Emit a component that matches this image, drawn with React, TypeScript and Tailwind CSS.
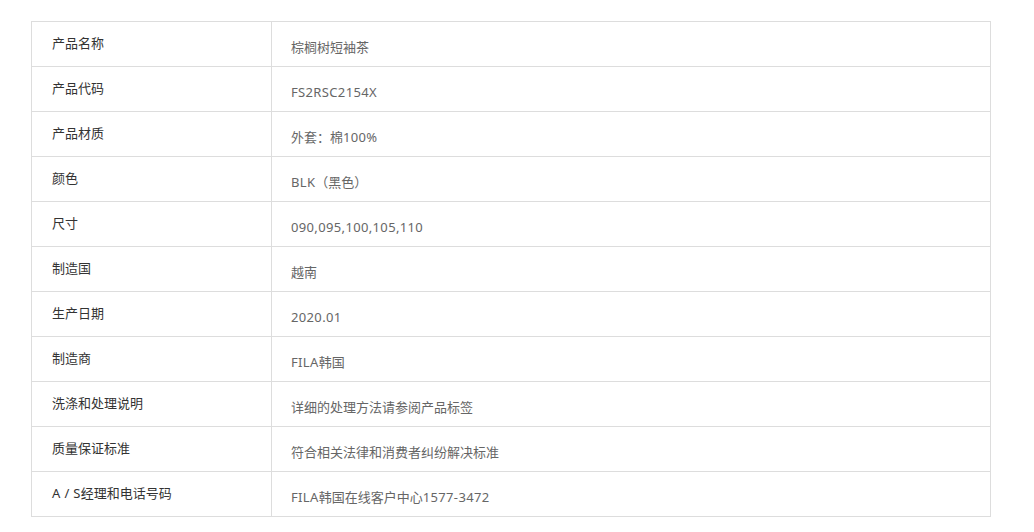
import React from "react";

const rows: [string, string][] = [
  ["产品名称", "棕榈树短袖茶"],
  ["产品代码", "FS2RSC2154X"],
  ["产品材质", "外套：棉100%"],
  ["颜色", "BLK（黑色）"],
  ["尺寸", "090,095,100,105,110"],
  ["制造国", "越南"],
  ["生产日期", "2020.01"],
  ["制造商", "FILA韩国"],
  ["洗涤和处理说明", "详细的处理方法请参阅产品标签"],
  ["质量保证标准", "符合相关法律和消费者纠纷解决标准"],
  ["A / S经理和电话号码", "FILA韩国在线客户中心1577-3472"],
];

function Mixed({ text }: { text: string }) {
  const parts = text.match(/[\x20-\x7e]+|[^\x20-\x7e]+/g) || [];
  return (
    <>
      {parts.map((p, i) =>
        /^[\x20-\x7e]+$/.test(p) ? (
          <span key={i} className="tracking-[0.35px]">
            {p}
          </span>
        ) : (
          <span key={i}>{p}</span>
        )
      )}
    </>
  );
}

export default function App() {
  return (
    <div
      className="w-[1034px] h-[532px] bg-white pt-[21px] pl-[31px]"
      style={{ fontFamily: '"Noto Sans", "Noto Sans CJK SC", sans-serif' }}
    >
      <div className="w-[960px] border border-[#dddddd] border-b-0">
        {rows.map(([k, v]) => (
          <div key={k} className="flex h-[45px] border-b border-[#dddddd]">
            <div className="w-[240px] shrink-0 border-r border-[#dddddd] pl-[20px] pt-[11px] text-[13px] leading-[20px] text-[#333333]">
              <Mixed text={k} />
            </div>
            <div className="flex-1 pl-[19px] pt-[15px] text-[13px] leading-[20px] text-[#666666]">
              <Mixed text={v} />
            </div>
          </div>
        ))}
      </div>
    </div>
  );
}
